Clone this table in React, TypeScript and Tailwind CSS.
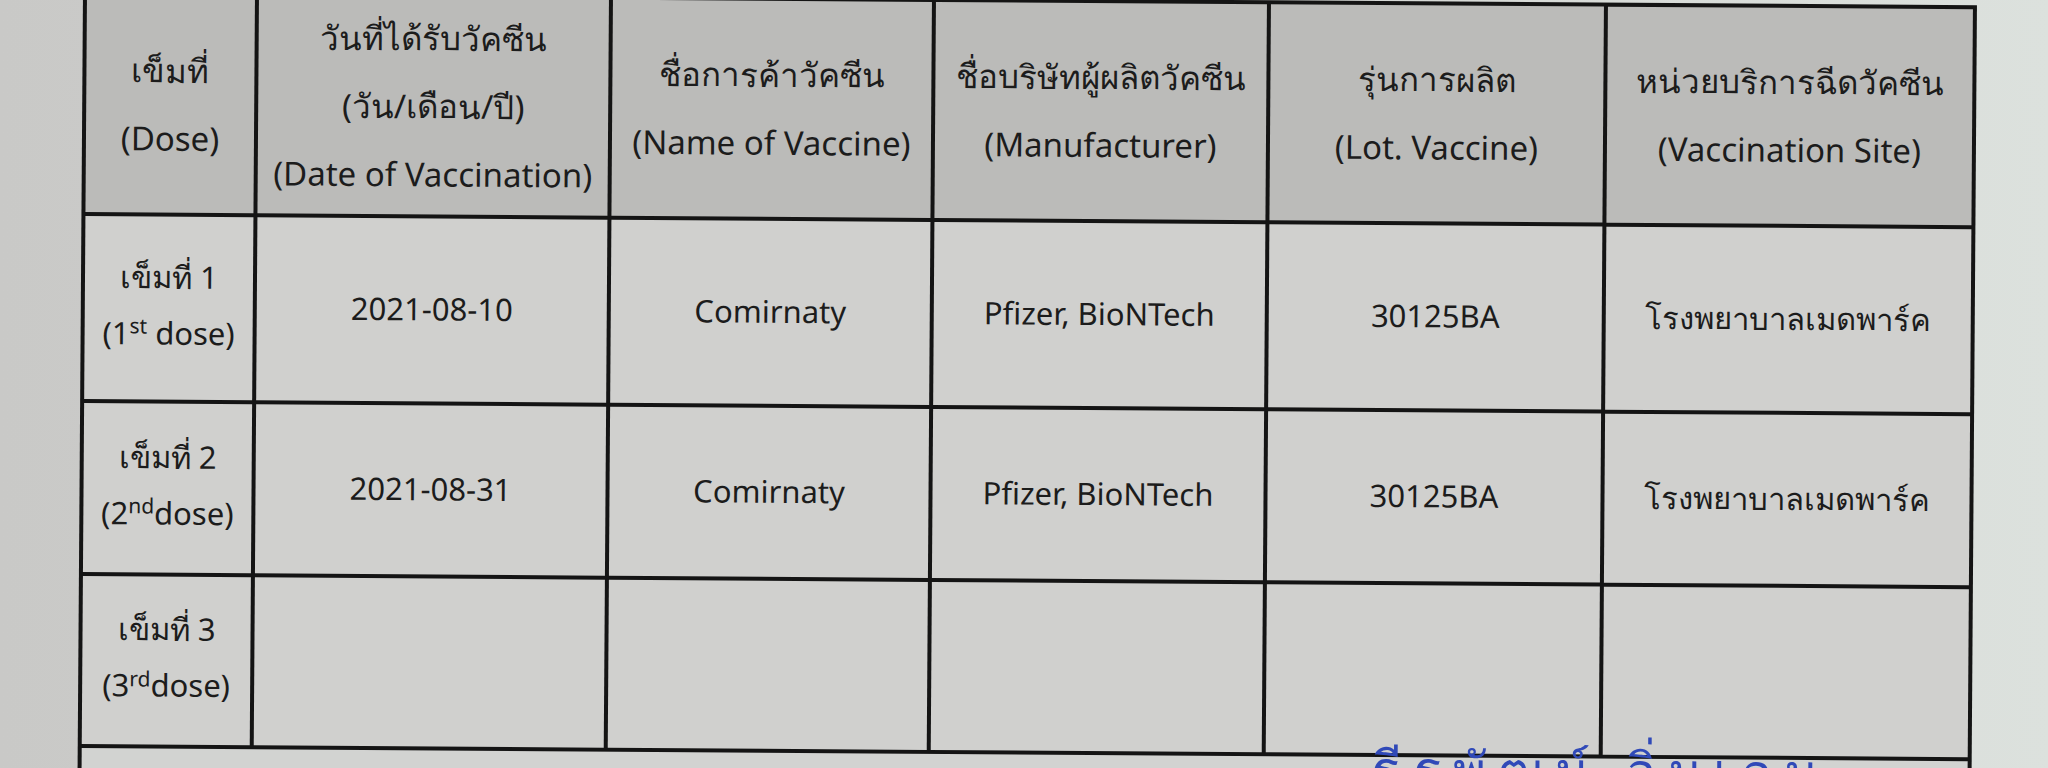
import type { ReactNode } from 'react'

type Row = {
  th: string
  en: ReactNode
  date?: string
  name?: string
  maker?: string
  lot?: string
  site?: string
}

const rows: Row[] = [
  {
    th: 'เข็มที่ 1',
    en: (
      <>
        (1<sup className="text-[21px]">st</sup> dose)
      </>
    ),
    date: '2021-08-10',
    name: 'Comirnaty',
    maker: 'Pfizer, BioNTech',
    lot: '30125BA',
    site: 'โรงพยาบาลเมดพาร์ค',
  },
  {
    th: 'เข็มที่ 2',
    en: (
      <>
        (2<sup className="text-[21px]">nd</sup>dose)
      </>
    ),
    date: '2021-08-31',
    name: 'Comirnaty',
    maker: 'Pfizer, BioNTech',
    lot: '30125BA',
    site: 'โรงพยาบาลเมดพาร์ค',
  },
  {
    th: 'เข็มที่ 3',
    en: (
      <>
        (3<sup className="text-[21px]">rd</sup>dose)
      </>
    ),
  },
]

function Head({ lines }: { lines: string[] }) {
  return (
    <div className="flex flex-col items-center justify-center bg-[#bbbbb9] text-center text-[33px] leading-[68px]">
      {lines.map((l) => (
        <span key={l}>{l}</span>
      ))}
    </div>
  )
}

function Cell({ children }: { children?: ReactNode }) {
  return <div className="flex items-center justify-center bg-[#d0d0ce] pb-[2px] text-center">{children}</div>
}

export default function App() {
  return (
    <div className="h-[768px] w-[2048px] overflow-hidden bg-gradient-to-r from-[#c9c9c7] via-[#d2d3d1] to-[#dce1dd] font-['Noto_Sans','DejaVu_Sans',sans-serif] text-[31px] text-[#1c1c1c]">
      <div className="ml-[83px] mt-[-8px] w-[1894px] origin-top-left rotate-[0.4deg]">
        <div className="grid grid-cols-[168px_350px_319px_331px_333px_365px] grid-rows-[216px_183px_169px_168px_120px] gap-[4px] bg-[#141414] p-[4px]">
          <Head lines={['เข็มที่', '(Dose)']} />
          <Head lines={['วันที่ได้รับวัคซีน', '(วัน/เดือน/ปี)', '(Date of Vaccination)']} />
          <Head lines={['ชื่อการค้าวัคซีน', '(Name of Vaccine)']} />
          <Head lines={['ชื่อบริษัทผู้ผลิตวัคซีน', '(Manufacturer)']} />
          <Head lines={['รุ่นการผลิต', '(Lot. Vaccine)']} />
          <Head lines={['หน่วยบริการฉีดวัคซีน', '(Vaccination Site)']} />

          {rows.map((r) => (
            <div key={r.th} className="contents">
              <div className="flex flex-col items-center justify-center bg-[#d0d0ce] pb-[8px] leading-[56px]">
                <span>{r.th}</span>
                <span>{r.en}</span>
              </div>
              <Cell>{r.date}</Cell>
              <Cell>{r.name}</Cell>
              <Cell>{r.maker}</Cell>
              <Cell>{r.lot}</Cell>
              <Cell>{r.site}</Cell>
            </div>
          ))}

          <div className="col-span-6 bg-[#d2d3d1]">
            <div className="relative z-10 -mt-[24px] pl-[1290px] text-[50px] font-medium leading-[70px] tracking-[12px] text-[#3049b8]">
              ธีรพัฒน์ อิ่มเอม
            </div>
          </div>
        </div>
      </div>
    </div>
  )
}
